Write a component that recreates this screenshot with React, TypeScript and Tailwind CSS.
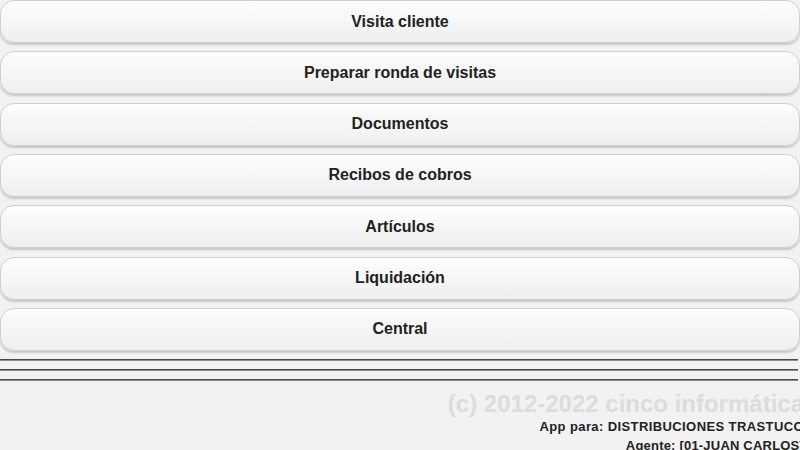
import React from 'react';

const MENU = [
  'Visita cliente',
  'Preparar ronda de visitas',
  'Documentos',
  'Recibos de cobros',
  'Artículos',
  'Liquidación',
  'Central',
];

function MenuButton({ label }: { label: string }) {
  return (
    <button
      className="h-[43px] w-full rounded-[14px] border border-[#cfcfcf] bg-gradient-to-b from-[#fdfdfd] to-[#efefef] text-[16px] font-bold text-[#222] shadow-[0_2px_2px_rgba(0,0,0,0.18)]"
    >
      {label}
    </button>
  );
}

export default function App() {
  return (
    <div
      className="h-[450px] w-[800px] overflow-hidden bg-[#f2f2f2]"
      style={{ fontFamily: '"Liberation Sans", Arial, sans-serif' }}
    >
      <div className="flex flex-col gap-[8.33px]">
        {MENU.map((m) => (
          <MenuButton key={m} label={m} />
        ))}
      </div>

      {/* separator lines */}
      <div className="mt-[8px] flex w-[798px] flex-col gap-[8px]">
        <div className="h-[2px] border-t border-[#4a4a4a] bg-[#8a8a8a]" />
        <div className="h-[2px] border-t border-[#4a4a4a] bg-[#8a8a8a]" />
        <div className="h-[2px] border-t border-[#4a4a4a] bg-[#8a8a8a]" />
      </div>

      {/* footer */}
      <div className="mr-[-4px] flex flex-col items-end whitespace-nowrap">
        <div className="mt-[10px] text-[24px] font-bold leading-[26px] text-[#dcdcdc]">
          (c) 2012-2022 cinco informática
        </div>
        <div className="mt-[1px] text-[13px] font-bold leading-[18px] tracking-[0.4px] text-[#222]">
          App para: DISTRIBUCIONES TRASTUCO
        </div>
        <div className="text-[13px] font-bold leading-[19px] tracking-[0.2px] text-[#222]">
          Agente: [01-JUAN CARLOS]
        </div>
      </div>
    </div>
  );
}
